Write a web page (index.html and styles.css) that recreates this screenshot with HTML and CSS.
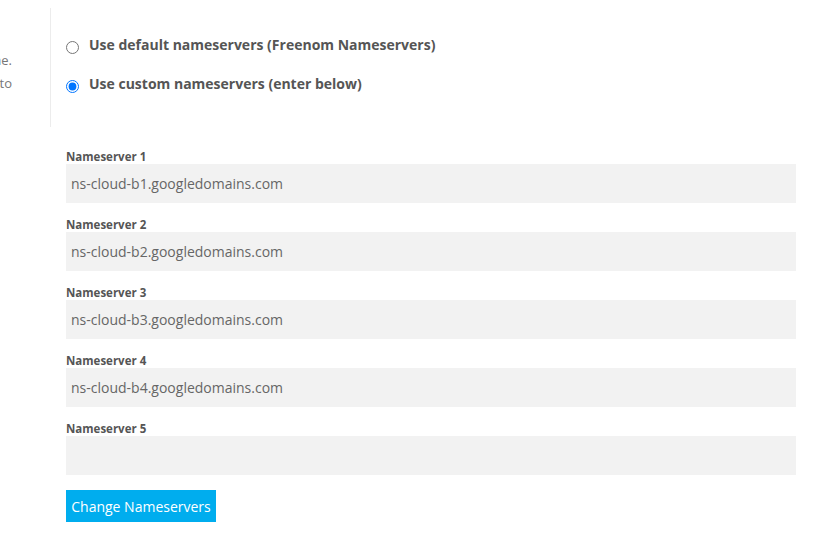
FILE: index.html
```html
<!DOCTYPE html>
<html>
<head>
<meta charset="utf-8">
<link rel="stylesheet" href="styles.css">
</head>
<body>
<div class="page">
  <div class="top">
    <div class="side">
      <p class="side-line">for your domain name.</p>
      <p class="side-line">nameservers below to</p>
    </div>
    <div class="options">
      <label class="option"><input type="radio" name="ns" class="radio"><span>Use default nameservers (Freenom Nameservers)</span></label>
      <label class="option"><input type="radio" name="ns" class="radio" checked><span>Use custom nameservers (enter below)</span></label>
    </div>
  </div>
  <form class="form">
    <div class="field"><label class="label">Nameserver 1</label><input class="input" type="text" value="ns-cloud-b1.googledomains.com"></div>
    <div class="field"><label class="label">Nameserver 2</label><input class="input" type="text" value="ns-cloud-b2.googledomains.com"></div>
    <div class="field"><label class="label">Nameserver 3</label><input class="input" type="text" value="ns-cloud-b3.googledomains.com"></div>
    <div class="field"><label class="label">Nameserver 4</label><input class="input" type="text" value="ns-cloud-b4.googledomains.com"></div>
    <div class="field"><label class="label">Nameserver 5</label><input class="input" type="text" value=""></div>
    <button type="button" class="btn">Change Nameservers</button>
  </form>
</div>
</body>
</html>
```
FILE: styles.css
```css
* { box-sizing: border-box; }
html, body { margin: 0; padding: 0; background: #fff; }
body { font-family: "Open Sans", "Liberation Sans", sans-serif; color: #555; }
.page { width: 829px; height: 546px; overflow: hidden; }
.top { display: flex; padding-top: 8px; }
.side {
  width: 51px;
  height: 119px;
  border-right: 1px solid #ececec;
  overflow: hidden;
  padding-top: 41px;
  padding-right: 38px;
  direction: rtl;
}
.side-line {
  margin: 0;
  font-size: 13px;
  line-height: 23px;
  color: #777;
  white-space: nowrap;
  direction: ltr;
  text-align: right;
  float: right;
  clear: both;
}
.options { display: flex; flex-direction: column; gap: 20px; padding: 27px 0 0 14px; }
.option { display: flex; align-items: center; font-size: 14px; font-weight: 700; color: #555; line-height: 19px; }
.radio { margin: 6px 10px 0 1px; width: 13px; height: 13px; }
.form { padding: 22px 33px 0 66px; display: flex; flex-direction: column; }
.field { display: flex; flex-direction: column; }
.label { font-size: 11.5px; font-weight: 700; color: #555; line-height: 15px; margin: 14px 0 0; }
.field:first-child .label { margin-top: 0; }
.input {
  height: 39px;
  border: none;
  background: #f2f2f2;
  font-family: "Open Sans", "Liberation Sans", sans-serif;
  font-size: 14px;
  color: #666;
  padding: 0 5px;
  outline: none;
}
.btn {
  margin-top: 15px;
  align-self: flex-start;
  width: 150px;
  height: 32px;
  border: none;
  background: #00adee;
  color: #fff;
  font-family: "Open Sans", "Liberation Sans", sans-serif;
  font-size: 14px;
  padding: 0;
}
```
